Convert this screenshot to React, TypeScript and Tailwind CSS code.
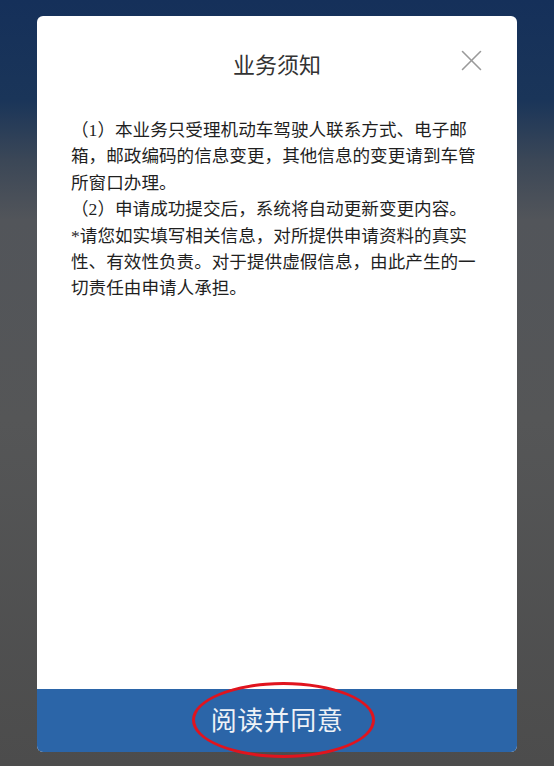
const CloseIcon = () => (
  <svg width="21" height="21" viewBox="0 0 21 21" fill="none" stroke="#9a9a9a" strokeWidth="1.6" strokeLinecap="round">
    <path d="M1.5 1.5L19.5 19.5" />
    <path d="M19.5 1.5L1.5 19.5" />
  </svg>
);

const notices = [
  '（1）本业务只受理机动车驾驶人联系方式、电子邮箱，邮政编码的信息变更，其他信息的变更请到车管所窗口办理。',
  '（2）申请成功提交后，系统将自动更新变更内容。',
  '*请您如实填写相关信息，对所提供申请资料的真实性、有效性负责。对于提供虚假信息，由此产生的一切责任由申请人承担。',
];

export default function App() {
  return (
    <div className="w-[554px] h-[766px] overflow-hidden bg-[linear-gradient(180deg,#15305a_0px,#1a3559_100px,#3b4757_160px,#52555a_220px,#555657_420px,#4c4c4c_766px)] pt-4 font-['Noto_Sans_CJK_SC',sans-serif]">
      <div className="relative mx-auto flex h-[736px] w-[480px] flex-col overflow-hidden rounded-md bg-white">
        <div className="relative flex h-[94px] shrink-0 items-center justify-center">
          <h2 className="text-[22px] text-[#333]">业务须知</h2>
          <button className="absolute right-[35px] top-[34px]">
            <CloseIcon />
          </button>
        </div>
        <div className="flex-1 pl-[34px] pr-[38px] pt-[7px] font-['Liberation_Serif','Noto_Sans_CJK_SC',serif] text-[17.6px] leading-[26.4px] text-[#1f1f1f]">
          {notices.map((t) => (
            <p key={t}>{t}</p>
          ))}
        </div>
        <div className="flex h-[63px] shrink-0 items-center justify-center bg-[#2b65a8] pb-1">
          <span className="text-[26px] tracking-[0.5px] text-[#eef2f7]">阅读并同意</span>
        </div>
      </div>
      <div className="pointer-events-none absolute left-[192px] top-[682px] h-[76px] w-[183px] rounded-[50%] border-[3px] border-[#e0141e]" />
    </div>
  );
}
